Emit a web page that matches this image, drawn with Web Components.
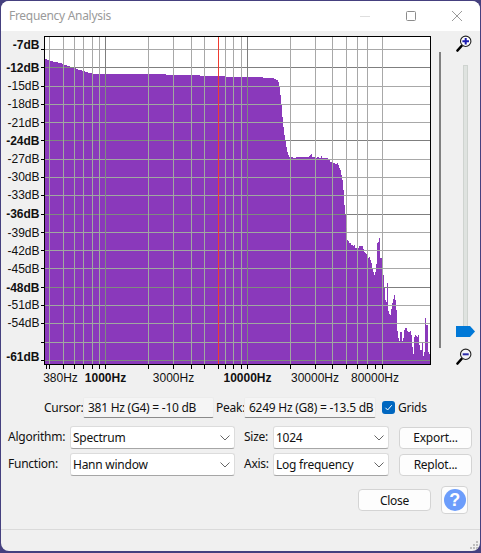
<!DOCTYPE html>
<html><head><meta charset="utf-8"><title>Frequency Analysis</title>
<style>
html,body{margin:0;padding:0;height:553px;overflow:hidden;background:#45407f}
body{font:12px "Noto Sans","Liberation Sans",sans-serif;letter-spacing:-.25px;color:#111}
</style></head>
<body>
<fa-window>
  <fa-titlebar slot="title">Frequency Analysis</fa-titlebar>
  <fa-main>
    <fa-plot></fa-plot>
    <fa-vslider></fa-vslider>
  </fa-main>
  <fa-info>
    <fa-readout label="Cursor:" w="39" fw="131">381 Hz (G4) = -10 dB</fa-readout>
    <fa-readout label="Peak:" w="28" fw="132">6249 Hz (G8) = -13.5 dB</fa-readout>
    <fa-check>Grids</fa-check>
  </fa-info>
  <fa-form>
    <fa-select label="Algorithm:" lw="62" fw="165">Spectrum</fa-select>
    <fa-select label="Size:" lw="29" fw="116">1024</fa-select>
    <fa-button>Export...</fa-button>
    <fa-select label="Function:" lw="62" fw="165">Hann window</fa-select>
    <fa-select label="Axis:" lw="29" fw="116">Log frequency</fa-select>
    <fa-button>Replot...</fa-button>
  </fa-form>
  <fa-footer>
    <fa-button style="width:73px">Close</fa-button>
    <fa-help></fa-help>
  </fa-footer>
  <fa-status slot="status"></fa-status>
</fa-window>
<script>
const UI='"Noto Sans","Liberation Sans",sans-serif';
function def(name,html,init){
  customElements.define(name,class extends HTMLElement{
    constructor(){super();this.attachShadow({mode:'open'}).innerHTML=typeof html==='function'?html(this):html;}
    connectedCallback(){init&&init(this,this.shadowRoot);}
  });
}
def('fa-window',`<style>:host{display:flex;flex-direction:column;position:absolute;left:1px;top:1px;width:479px;height:550px;background:#f0f0f0;border-radius:8px;overflow:hidden}
.body{display:flex;flex-direction:column;flex:1}</style>
<slot name="title"></slot><div class="body"><slot></slot></div><slot name="status"></slot>`);

def('fa-titlebar',`<style>:host{display:flex;align-items:center;height:30px;background:#fff;color:#9a9a9a;font:12px ${UI};letter-spacing:-.3px}
.t{flex:1;padding:0 0 2px 8px}
.b{width:46px;height:30px;display:flex;align-items:center;justify-content:center}
svg{display:block}</style>
<div class="t"><slot></slot></div>
<div class="b"><svg width="10" height="10"><path d="M0 5.5H10" stroke="#dedede"/></svg></div>
<div class="b"><svg width="10" height="10"><rect x=".5" y=".5" width="9" height="9" rx="1" fill="none" stroke="#8c8c8c"/></svg></div>
<div class="b"><svg width="10" height="10"><path d="M0 0L10 10M10 0L0 10" stroke="#9a9a9a" stroke-width="1"/></svg></div>`);

def('fa-main',`<style>:host{display:flex;height:355px}</style><slot></slot>`);

/* Spectrum outline: [x, top y] key points in page coordinates, drawn as steps */
const SPEC=[[45,59],[47,60],[50,61],[53,62],[58,63],[62,64],[64,65],[67,66],[70,67],[73,68],[76,69],[78,70],[82,71],[85,72],[88,73],[92,74],[166,75],[200,76],[225,77],[263,78],
[274,79],[276,80],[278,82],[279,86],[280,95],[281,105],[282,117],[283,127],[284,135],[285,140],[286,147],[287,152],[288,155],[289,157],[293,158],[296,157],
[309,156],[310,155],[311,154],[312,157],[315,158],[317,157],[319,158],[321,156],[322,158],[328,160],[330,162],[333,163],[335,164],[337,163],[338,165],[339,168],[340,170],[341,175],[342,180],[343,190],[344,205],[345,215],[346,228],[347,240],
[348,241],[349,243],[351,245],[353,246],[354,245],[355,248],[358,248],[359,246],[361,246],[363,249],[364,252],[365,253],[366,254],[367,256],[368,258],[369,257],[370,260],[371,263],[372,268],[373,272],[374,275],[375,272],[376,264],[377,243],[378,242],[379,238],[380,258],[382,256],[383,275],[384,288],[385,300],[386,302],[387,283],[388,311],[389,314],[390,315],[391,309],[392,303],[393,299],[394,295],[395,300],[396,310],[397,331],[398,338],[399,341],[400,332],[402,341],[403,338],[404,330],[405,328],[407,331],[408,332],[410,331],[411,335],[412,347],[413,354],[414,337],[415,335],[416,336],[417,337],[418,335],[419,345],[420,350],[422,342],[423,356],[424,352],[425,318],[426,325],[428,352],[429,354],[430,313],[431,313]];
function specPath(){
  let d='M45 364';
  for(let i=0;i<SPEC.length-1;i++){d+=`V${SPEC[i][1]}H${SPEC[i+1][0]}`;}
  return d+'V364Z';
}
const HY=[49,67,86,104,122,140,159,177,195,214,232,250,268,287,305,323,342,360];
const HD=new Set([67,140,214,287,360]);
const VX=[49,63,74,83,92,99,105,148,173,191,204,225,233,241,247,290,315,332,346,357,367,382];
const VD=new Set([105,247]);
const YL=[['-7dB',49,1],['-12dB',72,1],['-15dB',90],['-18dB',108],['-21dB',127],['-24dB',145,1],['-27dB',163],['-30dB',181],['-33dB',199],['-36dB',218,1],['-39dB',237],['-42dB',255],['-45dB',273],['-48dB',292,1],['-51dB',309],['-54dB',327],['-61dB',361,1]];
const XL=[['380Hz',60.5,0,11],['1000Hz',105.5,1],['3000Hz',173.5,0],['10000Hz',247.5,1],['30000Hz',315,0],['80000Hz',375,0]];
function grid(light,dark){
  let s='';
  HY.forEach(y=>s+=`<rect x="45" y="${y}" width="385" height="1" fill="${HD.has(y)?dark:light}"/>`);
  VX.forEach(x=>s+=`<rect x="${x}" y="37" width="1" height="327" fill="${VD.has(x)?dark:light}"/>`);
  return s;
}
function plotSvg(){
  const d=specPath();
  let s=`<svg width="431" height="355" viewBox="1 31 431 355" shape-rendering="crispEdges">
  <defs><clipPath id="c"><path d="${d}"/></clipPath></defs>
  <rect x="45" y="37" width="385" height="327" fill="#fff"/>
  ${grid('#a8a8a8','#7f7f7f')}
  <path d="${d}" fill="#8a39bb"/>
  <g clip-path="url(#c)">${grid('#a0a8a0','#7f8a7f')}</g>
  <rect x="218" y="37" width="1" height="327" fill="#f03c30"/>
  <path d="M44.5 364V36.5H430.5V364.5H44" fill="none" stroke="#000"/>
  <rect x="44" y="364" width="387" height="1" fill="#000"/>`;
  HY.forEach(y=>s+=`<rect x="41" y="${y}" width="3" height="1" fill="#000"/>`);
  VX.concat([46,218,375]).forEach(x=>s+=`<rect x="${x}" y="365" width="1" height="4" fill="#000"/>`);
  YL.forEach(([t,y,b])=>s+=`<text x="39.5" y="${y}" text-anchor="end" font-weight="${b?700:400}">${t}</text>`);
  XL.forEach(([t,x,b,fs])=>s+=`<text x="${x}" y="382" text-anchor="middle" font-weight="${b?700:400}"${fs?` font-size="${fs}"`:''}>${t}</text>`);
  return s+'</svg>';
}
def('fa-plot',()=>`<style>:host{display:block;width:431px;flex:none}
svg{display:block}text{font-family:"Liberation Sans",Arial,sans-serif;font-size:12px;letter-spacing:0;fill:#111;shape-rendering:auto}</style>${plotSvg()}`);

const mag=(minus)=>`<svg width="19" height="18" viewBox="0 0 19 18">
<path d="M5.5 12L1.5 16.5" stroke="#000" stroke-width="2.6" stroke-linecap="round"/>
<circle cx="9.7" cy="7.3" r="5.2" fill="${minus?'#f4f4f8':'#fff'}" stroke="#222" stroke-width="1.1"/>
${minus?'<rect x="6.7" y="6.3" width="6" height="2" fill="#2a2aa8"/>':'<path d="M9.7 4V10.6M6.4 7.3H13" stroke="#1c1cb0" stroke-width="2"/>'}
</svg>`;
def('fa-vslider',`<style>:host{display:flex;flex:1;padding-left:7px}
.bar{width:2px;height:296px;margin-top:21px;background:#808080;flex:none}
.col{width:19px;margin-left:15px;display:flex;flex-direction:column;align-items:center}
.ic{height:18px;width:19px;margin-top:3px}.ic.b{margin-top:10px}
svg{display:block}
.track{position:relative;width:5px;height:272px;margin-top:13px;background:#dfe3e0;box-shadow:inset 0 0 0 1px #cfd4d0;box-sizing:border-box}
.h{position:absolute;left:-7px;bottom:0}
</style><div class="bar"></div><div class="col"><div class="ic">${mag(0)}</div><div class="track"><svg class="h" width="19" height="11"><path d="M0 0H14L19 5.5L14 11H0Z" fill="#0078d7"/></svg></div><div class="ic b">${mag(1)}</div></div>`);

def('fa-info',`<style>:host{display:flex;align-items:center;height:21px;margin-top:11px;padding-left:43px;gap:2px}</style><slot></slot>`);
def('fa-readout',e=>`<style>:host{display:flex;align-items:center}
.l{width:${e.getAttribute('w')}px;flex:none;white-space:nowrap}
.f{width:${e.getAttribute('fw')}px;height:21px;box-sizing:border-box;padding-left:4px;line-height:20px;background:#f5f5f5;border:1px solid #ececec;border-bottom:1px solid #8a8a8a;border-radius:2px;white-space:nowrap}
</style><span class="l">${e.getAttribute('label')}</span><span class="f"><slot></slot></span>`);
def('fa-check',`<style>:host{display:flex;align-items:center;margin-left:4px;gap:3px}
.b{width:13px;height:13px;border-radius:3px;background:#0067c0;display:block}svg{display:block}</style>
<svg class="b" viewBox="0 0 13 13"><path d="M3.5 6.8L5.6 9L9.8 4.2" fill="none" stroke="#fff" stroke-width="1"/></svg><slot></slot>`);

def('fa-form',`<style>:host{display:grid;grid-template-columns:227px 146px 73px;column-gap:9px;row-gap:4px;grid-auto-rows:23px;margin-top:8px;padding-left:7px;align-items:center}</style><slot></slot>`);
def('fa-select',e=>`<style>:host{display:grid;grid-template-columns:${e.getAttribute('lw')}px ${e.getAttribute('fw')}px;align-items:center}
.l{white-space:nowrap;margin-top:-2px}
.f{display:flex;align-items:center;height:23px;box-sizing:border-box;padding:0 3px 0 2px;background:#fff;border:1px solid #dcdcdc;border-bottom-color:#a6a6a6;border-radius:3px}
.v{flex:1;white-space:nowrap}</style>
<span class="l">${e.getAttribute('label')}</span><span class="f"><span class="v"><slot></slot></span><svg width="10" height="6" style="margin-right:1px"><path d="M.5 .5L5 5L9.5 .5" fill="none" stroke="#666"/></svg></span>`);
def('fa-button',`<style>:host{display:flex;align-items:center;justify-content:center;height:22px;box-sizing:border-box;background:#fdfdfd;border:1px solid #d4d4d4;border-radius:4px}</style><slot></slot>`);
def('fa-footer',`<style>:host{display:flex;justify-content:flex-end;align-items:center;gap:10px;height:28px;margin-top:10px;padding-right:12px}</style><slot></slot>`);
def('fa-help',`<style>:host{display:flex;align-items:center;justify-content:center;width:27px;height:28px;box-sizing:border-box;background:#fdfdfd;border:1px solid #d4d4d4;border-radius:4px}
.c{width:22px;height:22px;border-radius:50%;background:#6c9dfb;color:#fff;font:700 18px/22px "Liberation Sans",sans-serif;text-align:center}</style><span class="c">?</span>`);
def('fa-status',`<style>:host{display:block;position:relative;height:22px;box-sizing:border-box;border-top:1px solid #dadada;margin-top:auto}
svg{position:absolute;right:1px;bottom:1px;display:block}</style>
<svg width="9" height="9" fill="#bdbdbd"><rect x="6" y="0" width="2" height="2"/><rect x="3" y="3" width="2" height="2"/><rect x="6" y="3" width="2" height="2"/><rect x="0" y="6" width="2" height="2"/><rect x="3" y="6" width="2" height="2"/><rect x="6" y="6" width="2" height="2"/></svg>`);
</script>
</body></html>
